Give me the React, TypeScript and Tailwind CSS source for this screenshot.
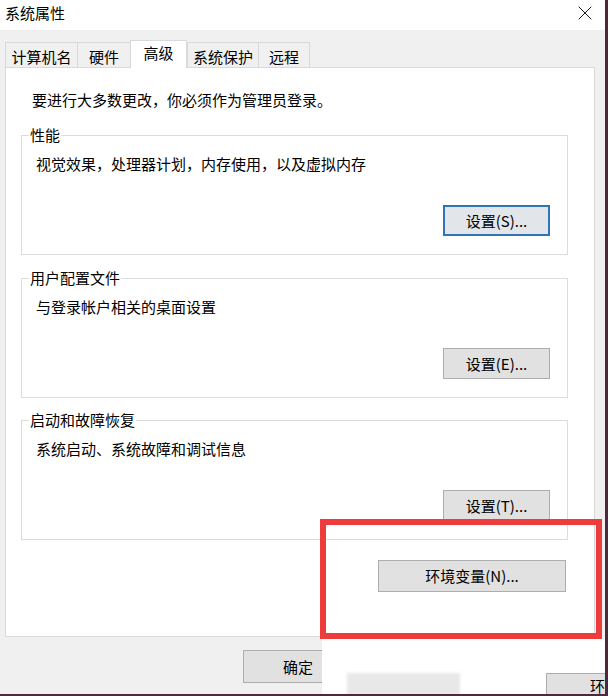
import { X } from 'lucide-react';

const tabs = [
  { label: '计算机名', w: 'w-[72px]' },
  { label: '硬件', w: 'w-[53px]' },
  { label: '高级', w: 'w-[57px]', active: true },
  { label: '系统保护', w: 'w-[71px]' },
  { label: '远程', w: 'w-[52px]', last: true },
];

const groups = [
  { title: '性能', desc: '视觉效果，处理器计划，内存使用，以及虚拟内存', btn: '设置(S)...', focused: true, mt: 'mt-[25px]' },
  { title: '用户配置文件', desc: '与登录帐户相关的桌面设置', btn: '设置(E)...', mt: 'mt-[23px]' },
  { title: '启动和故障恢复', desc: '系统启动、系统故障和调试信息', btn: '设置(T)...', mt: 'mt-[22px]' },
];

const Button = ({ label, className = '', focused = false }: { label: string; className?: string; focused?: boolean }) => (
  <div
    className={`flex items-center justify-center bg-[#e1e1e1] text-[15px] leading-[20px] text-black ${
      focused ? 'border-2 border-[#2f74b5] bg-[#e2e6ea]' : 'border border-[#adadad]'
    } ${className}`}
  >
    {label}
  </div>
);

const Group = ({ title, desc, btn, focused, mt }: (typeof groups)[number]) => (
  <div className={`flex flex-col border border-[#dcdcdc] pb-[18px] ${mt}`}>
    <div className="-mt-[11px] ml-[7px] w-fit bg-white px-[1px] leading-[20px]">{title}</div>
    <div className="mt-[9px] ml-[14px] leading-[20px]">{desc}</div>
    <Button label={btn} focused={focused} className="mt-[31px] mr-[17px] h-[31px] w-[107px] self-end" />
  </div>
);

export default function App() {
  return (
    <div className="relative flex h-[696px] w-[608px] flex-col overflow-hidden border-r-[3px] border-b-2 border-[#4b2a3b] bg-[#f0f0f0] font-['Noto_Sans_CJK_SC','Noto_Sans',sans-serif] text-[15px] text-black">
      {/* title bar */}
      <div className="flex h-[30px] shrink-0 items-start justify-between bg-white">
        <span className="ml-[5px] mt-[3px] leading-[20px]">系统属性</span>
        <X size={24} strokeWidth={0.9} className="mt-[1px] mr-[8px] text-black" />
      </div>

      <div className="flex flex-1 flex-col pl-[5px] pr-[10px] pt-[10px]">
        {/* tabs */}
        <div className="flex items-end">
          {tabs.map((t) =>
            t.active ? (
              <div
                key={t.label}
                className={`relative z-10 -mb-px flex h-[28px] items-center justify-center border border-b-0 border-[#d9d9d9] bg-white pb-[3px] leading-[20px] ${t.w}`}
              >
                {t.label}
              </div>
            ) : (
              <div
                key={t.label}
                className={`flex h-[25px] items-center justify-center border-t border-l border-[#d9d9d9] pt-[4px] leading-[20px] ${t.last ? 'border-r' : ''} ${t.w}`}
              >
                {t.label}
              </div>
            )
          )}
        </div>

        {/* panel */}
        <div className="flex h-[570px] flex-col border border-[#d9d9d9] bg-white pl-[15px] pr-[26px] pt-[22px]">
          <div className="ml-[11px] leading-[20px]">要进行大多数更改，你必须作为管理员登录。</div>
          {groups.map((g) => (
            <Group key={g.title} {...g} />
          ))}
          <Button label="环境变量(N)..." className="mt-[20px] mr-[2px] h-[32px] w-[188px] self-end" />
        </div>

        {/* footer */}
        <div className="mt-[13px] flex justify-end gap-[11px]">
          <Button label="确定" className="h-[33px] w-[110px]" />
          <Button label="取消" className="h-[33px] w-[110px]" />
          <Button label="应用(A)" className="h-[33px] w-[110px]" />
        </div>
      </div>

      {/* annotation: red frame */}
      <div className="absolute left-[320px] top-[519px] h-[120px] w-[282px] border-[6px] border-[#ee3b3b]" />

      {/* pasted white patch */}
      <div className="absolute left-[322px] top-[639px] flex h-[55px] w-[283px] items-start overflow-hidden bg-white pt-[34px]">
        <div className="ml-[25px] h-[24px] w-[113px] bg-[#e8e8e8] blur-[1.5px]" />
        <div className="ml-auto flex h-[24px] w-[59px] items-center justify-end border border-r-0 border-b-0 border-[#adadad] bg-[#e1e1e1] leading-[20px] whitespace-nowrap">
          环
        </div>
      </div>
    </div>
  );
}
